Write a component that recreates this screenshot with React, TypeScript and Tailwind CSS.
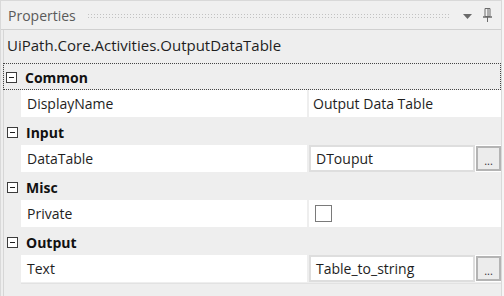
import React from 'react';

const font = { fontFamily: '"Open Sans", "Noto Sans", Arial, sans-serif' };

const Minus: React.FC = () => (
  <span className="w-[11px] h-[11px] border border-[#3c3c3c] bg-white flex items-center justify-center mr-[8px]">
    <span className="w-[5px] h-px bg-[#1e1e1e]" />
  </span>
);

const Category: React.FC<{ label: string; focused?: boolean }> = ({ label, focused }) => (
  <div
    className={
      focused
        ? 'h-[27px] flex items-center pl-[2px] pt-[2px] border border-dotted border-[#444] -ml-px'
        : 'h-[27px] flex items-center pl-[3px] pt-[2px]'
    }
  >
    <Minus />
    <span className="font-bold text-[14px] text-[#111]">{label}</span>
  </div>
);

const Row: React.FC<{ name: string; children: React.ReactNode }> = ({ name, children }) => (
  <div className="h-[28px] flex pl-[17px] pb-px">
    <div className="w-[286px] bg-white flex items-center pl-[6px] text-[14px] text-[#1e1e1e]">{name}</div>
    <div className="flex-1 ml-[2px] bg-white flex items-center">{children}</div>
  </div>
);

const TextBox: React.FC<{ value: string }> = ({ value }) => (
  <div className="flex items-center h-full w-full">
    <div className="flex-1 h-full border-2 border-[#dedede] bg-white flex items-center pl-[5px] text-[14px] text-[#1e1e1e]">
      {value}
    </div>
    <div className="w-[25px] h-[25px] ml-px border-2 border-[#b4b4b4] bg-[#ececec] flex items-end justify-center pb-[3px] text-[11px] leading-none text-[#333]">
      ...
    </div>
  </div>
);

export default function App() {
  return (
    <div className="w-[504px] h-[296px] bg-[#f5f5f5] overflow-hidden" style={font}>
      <div className="w-[502px] h-full border-t border-l border-r border-[#d9d9d9] bg-[#eeeeee] flex flex-col">
        <div className="h-[29px] border-b border-[#d0d0d0] bg-[#f0f0f0] flex items-center pl-[7px] pr-[9px]">
          <span className="text-[14px] text-[#5a5a5a]">Properties</span>
          <div className="flex-1 ml-[11px] mr-[12px] h-[5px] bg-[radial-gradient(circle,#c2c2c2_0.8px,transparent_1px)] bg-[length:3px_3px]" />
          <svg width="9" height="5" viewBox="0 0 9 5" className="mr-[11px] mt-[3px]">
            <path d="M0 0H9L4.5 5Z" fill="#6a6a6a" />
          </svg>
          <svg width="9" height="14" viewBox="0 0 9 14">
            <path d="M2 0.5H7V8.5H2Z" fill="none" stroke="#6a6a6a" />
            <path d="M5 1V8" stroke="#6a6a6a" />
            <path d="M0 9H9" stroke="#6a6a6a" strokeWidth="1.5" />
            <path d="M4.5 9V14" stroke="#6a6a6a" />
          </svg>
        </div>
        <div className="flex-1 ml-[2px] border-l border-[#d6d6d6] flex flex-col">
          <div className="h-[33px] flex items-center pl-[3px] pb-[3px] text-[15px] text-[#1e1e1e]">
            UiPath.Core.Activities.OutputDataTable
          </div>
          <Category label="Common" focused />
          <Row name="DisplayName">
            <span className="pl-[4px] text-[14px] text-[#1e1e1e]">Output Data Table</span>
          </Row>
          <Category label="Input" />
          <Row name="DataTable">
            <TextBox value="DTouput" />
          </Row>
          <Category label="Misc" />
          <Row name="Private">
            <span className="ml-[6px] w-[17px] h-[17px] border border-[#7a7a7a] bg-white" />
          </Row>
          <Category label="Output" />
          <Row name="Text">
            <TextBox value="Table_to_string" />
          </Row>
          <div className="h-px ml-[17px] bg-[#e2e2e2]" />
        </div>
      </div>
    </div>
  );
}
